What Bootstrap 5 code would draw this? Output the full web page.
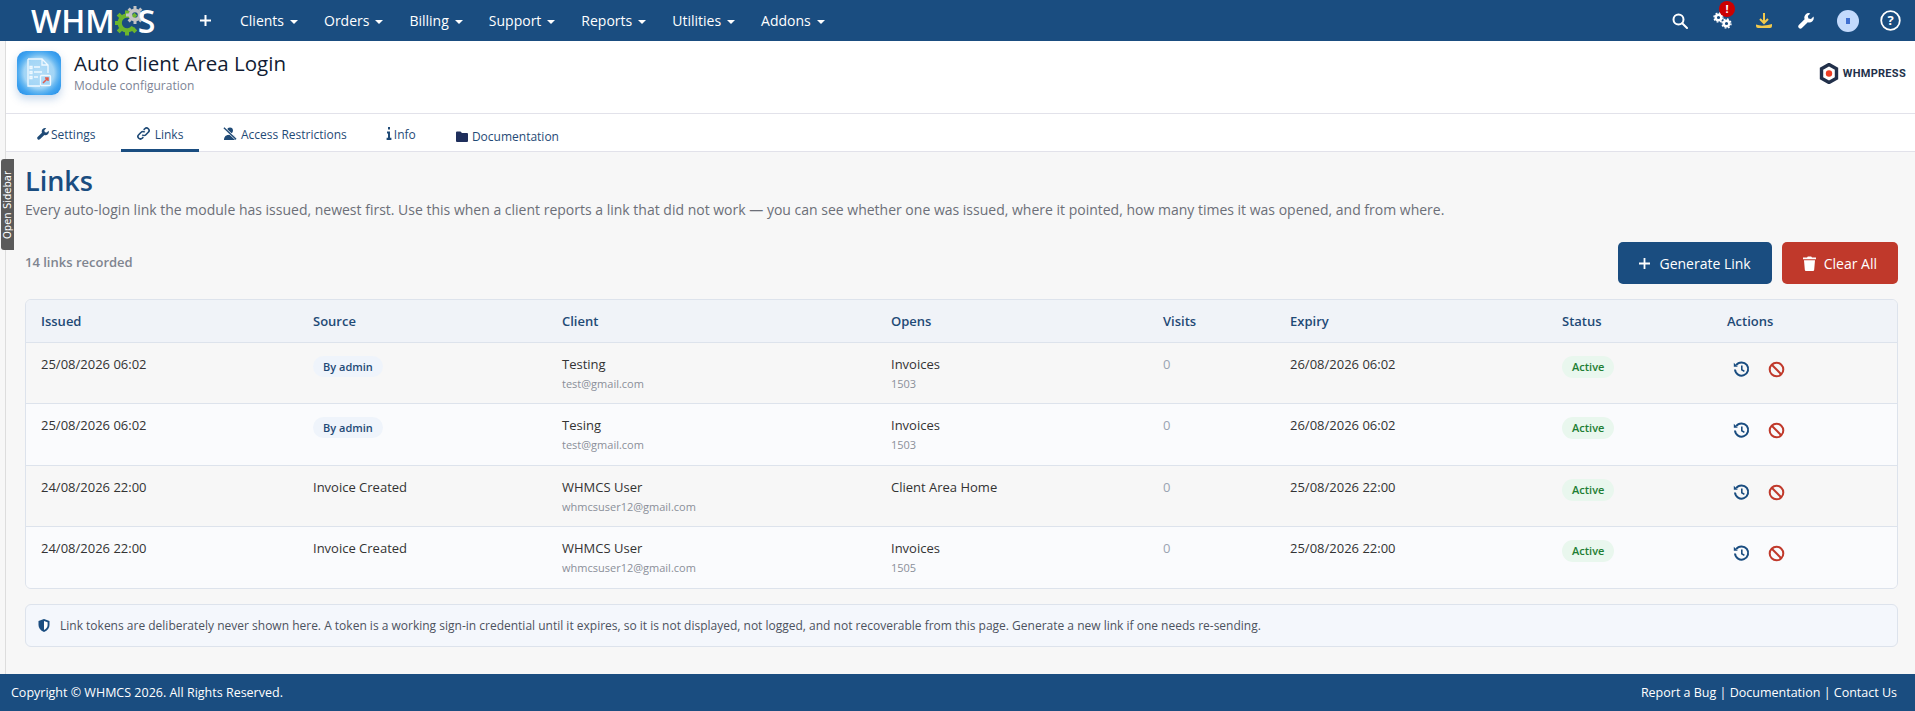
<!DOCTYPE html>
<html lang="en"><head><meta charset="utf-8"><title>Links</title>
<link rel="stylesheet" href="https://cdn.jsdelivr.net/npm/bootstrap@5.3.0/dist/css/bootstrap.min.css">
<style>
html,body{height:100%}
body{font-family:"Open Sans",sans-serif;font-size:13px;background:#f7f7f7;color:#333;overflow:hidden}
.pg{min-height:711px}
.topbar{height:41px;background:#1a4d80;padding:0}
.brandbox{width:185px;padding-left:31px;color:#fff;font:600 32px/41px "Open Sans",sans-serif;letter-spacing:0}
.brandbox svg{margin:0 -10px 0 0;vertical-align:-3px}
.mainnav{font-size:14px;margin-left:14px}
.mainnav a{color:#fff;text-decoration:none;padding:0 14px 0 0;margin-right:12px;display:block;line-height:41px;white-space:nowrap}
.caretm::after{content:"";display:inline-block;margin-left:6px;vertical-align:2px;border-top:4px solid #fff;border-left:4px solid transparent;border-right:4px solid transparent}
.plus{width:41px}
.rightnav{padding-right:4px}
.ricon{width:42px;height:41px;display:flex;align-items:center;justify-content:center;position:relative}
.alertdot{position:absolute;top:1px;left:18px;width:16px;height:16px;border-radius:50%;background:#c00;color:#fff;font:700 11px/16px "Open Sans",sans-serif;text-align:center}
.avatarc{width:22px;height:22px;border-radius:50%;background:#c3dafc;display:flex;align-items:center;justify-content:center}
.avatarc i{display:block;width:4px;height:6px;background:#3f6fd0}
.shell{margin-left:5px;border-left:1px solid #ddd;position:relative}
.modhead{height:73px;background:#fff;border-bottom:1px solid #e2e2ea;padding:9px 0 0 11px}
.headl{gap:13px}
.appicon{width:44px;height:44px;margin-top:1px;border-radius:9px;background:radial-gradient(circle at 50% 50%,#b4ddf7 0,#a2d5f6 48%,#6ab9f1 60%,#42a5f0 72%,#1e88e5 100%);box-shadow:0 4px 9px rgba(30,100,180,.25);display:flex;align-items:center;justify-content:center}
.modtitle{font-size:20.5px;font-weight:500;color:#111c33;line-height:27px;margin:0}
.modsub{font-size:12px;color:#7d8496;margin-top:1px;line-height:16px}
.vendor{font:700 11px/1 "Roboto",sans-serif;color:#22304a;letter-spacing:.3px;padding-right:9px;margin-top:13px;height:21px}
.tabsrow{height:38px;background:#fff;border-bottom:1px solid #e2e2ea;padding-left:12px}
.tabsrow .nav-link{color:#1f4a76;font-size:12px;padding:0;height:38px;line-height:42px;border:0;border-radius:0;background:none;white-space:nowrap}
.tabsrow .nav-link.active{border-bottom:3px solid #1a4d80;color:#1f4a76;background:none}
.tabsrow svg{vertical-align:-1px;margin-right:2px}
.tabsrow .nav-link.t1{width:103px;padding-left:19px}
.tabsrow .nav-link.t2{width:78px;text-align:center}
.tabsrow .nav-link.t3{margin-left:24px}
.tabsrow .nav-link.t3 svg{margin-right:4px}
.tabsrow .nav-link.t4{margin-left:39px}
.tabsrow .nav-link.t5{margin-left:40px;line-height:46px}
.tabsrow .nav-link.t5 svg{margin-right:1px}
.bodyarea{padding:11px 17px 0 19px;height:522px}
.secth{font-size:27px;font-weight:600;color:#1a4d80;line-height:36px;margin:0}
.sectp{font-size:14px;color:#6c6f78;margin:1px 0 0;line-height:20px}
.countrow{margin-top:22px;height:42px}
.countl{font-size:13px;font-weight:600;color:#7f8590}
.btnrow{gap:10px}
.btnm{height:42px;font-size:14px;color:#fff;border:0;border-radius:5px;display:inline-flex;align-items:center;gap:8px;padding:0 21px 0 20px}
.btnb,.btnb:hover{background:#1a4d80;color:#fff}
.btnr,.btnr:hover{background:#c0392b;color:#fff;padding:0 21px 0 21px;gap:8px}
.tablebox{margin-top:15px;border:1px solid #dde3ec;border-radius:6px;overflow:hidden}
.lt{table-layout:fixed;margin:0;--bs-table-bg:transparent;font-size:13px;color:#333}
.lt th{height:42px;background:#f0f3f8;color:#1f4a76;font-weight:600;padding:2px 15px 0;vertical-align:middle;border-bottom:1px solid #dde3ec}
.lt td{padding:11px 15px 0;vertical-align:top;border-bottom:1px solid #dde3ec;height:61.500px;line-height:20px;color:#333}
.lt tr:last-child td{border-bottom:0}
.lt tbody tr:nth-child(even) td{background:#fafbfd}
.lt td.visn{color:#9aa4b2}
.c1{width:272px}.c2{width:249px}.c3{width:329px}.c4{width:272px}.c5{width:127px}.c6{width:272px}.c7{width:165px}
.subt{font-size:11px;color:#8a8f99;line-height:18px;margin-top:1px}
.pillb{display:inline-block;background:#eff4fb;color:#1f4a76;font-size:11px;font-weight:600;padding:0 10px;height:21px;line-height:21px;border-radius:11px;margin-top:2px}
.pillg{display:inline-block;background:#e9f7ee;color:#1e7e34;font-size:11px;font-weight:600;padding:0 10px;height:22px;line-height:22px;border-radius:11px;margin-top:2px}
.acts{display:flex;gap:18px;padding:7px 0 0 6px}
.notebox{margin-top:15px;background:#f4f7fc;border:1px solid #dde3ec;border-radius:6px;height:43px;display:flex;align-items:center;padding:0 12px;font-size:12px;color:#4c525e;gap:10px}
.sidebtn{position:absolute;left:-5px;top:118px;width:13px;height:91px;background:#5a5a5a;border-radius:0 3px 3px 0;color:#fff;font:10px/13px "DejaVu Sans",sans-serif;writing-mode:vertical-rl;transform:rotate(180deg);text-align:center;white-space:nowrap}
.foot{height:37px;background:#1a4d80;color:#fff;font-size:12.5px;padding:1px 18px 0 11px}
.foot a{color:#fff;text-decoration:none}
</style></head><body>
<div class="pg d-flex flex-column">
<nav class="topbar d-flex align-items-center justify-content-between">
 <div class="d-flex align-items-center">
  <div class="brandbox text-nowrap">WHM<svg width="33" height="30" viewBox="0 0 33 30"><g transform="translate(12 17)" fill="#6cb52d"><path d="M8 -5A9.400 9.400 0 1 0 8 5L4.500 3A5.300 5.300 0 1 1 4.500 -3z"/><rect x="-2" y="-12.500" width="4" height="4"/><rect x="-2" y="8.500" width="4" height="4"/><rect x="-12.500" y="-2" width="4" height="4"/><rect x="-2" y="-12.500" width="4" height="4" transform="rotate(45)"/><rect x="-2" y="8.500" width="4" height="4" transform="rotate(45)"/><rect x="-2" y="-12.500" width="4" height="4" transform="rotate(-45)"/><rect x="-2" y="8.500" width="4" height="4" transform="rotate(-45)"/></g><g transform="translate(20 9)" fill="#c4c4c4"><path d="M-6.500 0a6.500 6.500 0 1 1 13 0a6.500 6.500 0 1 1-13 0zM-2.800 0a2.800 2.800 0 1 0 5.600 0a2.800 2.800 0 1 0-5.600 0z" fill-rule="evenodd"/><rect x="-1.500" y="-9" width="3" height="3"/><rect x="-1.500" y="6" width="3" height="3"/><rect x="-9" y="-1.500" width="3" height="3"/><rect x="6" y="-1.500" width="3" height="3"/><rect x="-1.500" y="-9" width="3" height="3" transform="rotate(45)"/><rect x="-1.500" y="-9" width="3" height="3" transform="rotate(-45)"/><rect x="-1.500" y="6" width="3" height="3" transform="rotate(45)"/><rect x="-1.500" y="6" width="3" height="3" transform="rotate(-45)"/></g></svg>S</div>
  <div class="plus d-flex justify-content-center"><svg width="13" height="13" viewBox="0 0 13 13"><path d="M6.500 1v11M1 6.500h11" stroke="#fff" stroke-width="2"/></svg></div>
  <div class="mainnav d-flex">
   <a href="#" class="caretm">Clients</a><a href="#" class="caretm">Orders</a><a href="#" class="caretm">Billing</a><a href="#" class="caretm">Support</a><a href="#" class="caretm">Reports</a><a href="#" class="caretm">Utilities</a><a href="#" class="caretm">Addons</a>
  </div>
 </div>
 <div class="rightnav d-flex">
  <div class="ricon"><svg width="16" height="16" viewBox="0 0 16 16" fill="none" stroke="#fff" stroke-width="2"><circle cx="6.500" cy="6.500" r="5"/><path d="M10.200 10.200 15 15" stroke-linecap="round"/></svg></div>
  <div class="ricon"><svg width="19" height="17" viewBox="0 0 19 17" fill="none" stroke="#fff"><circle cx="5.500" cy="5.500" r="2.800" stroke-width="2.400"/><circle cx="5.500" cy="5.500" r="4.500" stroke-width="1.400" stroke-dasharray="1.800 1.730"/><circle cx="13.500" cy="11.500" r="2.800" stroke-width="2.400"/><circle cx="13.500" cy="11.500" r="4.500" stroke-width="1.400" stroke-dasharray="1.800 1.730"/></svg><span class="alertdot">!</span></div>
  <div class="ricon"><svg width="16" height="16" viewBox="0 0 16 16"><path d="M0 11.500q4 1.500 8 1t8-1.500v2q0 2-2 2H2q-2 0-2-2z" fill="#f2c94c"/><path d="M8 0v9M4 6l4 4 4-4" fill="none" stroke="#f2c94c" stroke-width="2"/></svg></div>
  <div class="ricon"><svg width="16" height="16" viewBox="0 0 16 16"><path d="M15.500 3.600 13 6.100l-2.600-.6-.6-2.600L12.300.4A4.500 4.500 0 0 0 6.600 6.200L.8 12a2.200 2.200 0 0 0 3.100 3.100l5.900-5.800a4.500 4.500 0 0 0 5.700-5.700z" fill="#fff"/></svg></div>
  <div class="ricon"><span class="avatarc"><i></i></span></div>
  <div class="ricon"><svg width="21" height="21" viewBox="0 0 21 21"><circle cx="10.500" cy="10.500" r="9.300" fill="none" stroke="#fff" stroke-width="1.800"/><text x="10.500" y="15" text-anchor="middle" font-family="Open Sans" font-weight="700" font-size="13" fill="#fff">?</text></svg></div>
 </div>
</nav>
<div class="shell flex-grow-1">
 <div class="modhead d-flex justify-content-between">
  <div class="d-flex headl">
   <div class="appicon"><svg width="26" height="30" viewBox="0 0 26 30" fill="none" stroke="#f0f9ff" stroke-width="1.300"><path d="M2 1h14l6 6v8M14 28H2V1M16 1v6h6"/><path d="M8 9h6M8 14h8M8 19h4M4 8.500h2v2H4zM4 13.500h2v2H4zM4 18.500h2v2H4z"/><rect x="14.500" y="17.500" width="10" height="10" rx="1"/><path d="M17 25l5-5M19 20h3v3" stroke="#e25b4e" stroke-width="1.500"/></svg></div>
   <div><h1 class="modtitle">Auto Client Area Login</h1><div class="modsub">Module configuration</div></div>
  </div>
  <div class="vendor d-flex align-items-center gap-1"><svg width="20" height="21" viewBox="0 0 20 21"><path d="M10 1.500l7.500 4.200v9.600L10 19.500l-7.500-4.200V5.700z" fill="none" stroke="#22304a" stroke-width="3.400"/><circle cx="10" cy="10.500" r="3.200" fill="#ee3d23"/></svg>WHMPRESS</div>
 </div>
 <ul class="tabsrow nav">
  <li class="nav-item"><a class="nav-link t1" href="#"><svg width="12" height="12" viewBox="0 0 16 16"><path d="M15.500 3.600 13 6.100l-2.600-.6-.6-2.600L12.300.4A4.500 4.500 0 0 0 6.600 6.200L.8 12a2.200 2.200 0 0 0 3.100 3.100l5.900-5.800a4.500 4.500 0 0 0 5.700-5.700z" fill="#1f4a76"/></svg>Settings</a></li>
  <li class="nav-item"><a class="nav-link active t2" href="#"><svg width="13" height="13" viewBox="0 0 16 16" fill="none" stroke="#1f4a76" stroke-width="2"><path d="M6.500 9.500a3 3 0 0 0 4.400 0l3-3a3 3 0 0 0-4.300-4.300L8.200 3.600M9.500 6.500a3 3 0 0 0-4.400 0l-3 3a3 3 0 0 0 4.300 4.300l1.400-1.400"/></svg> Links</a></li>
  <li class="nav-item"><a class="nav-link t3" href="#"><svg width="14" height="13" viewBox="0 0 16 15"><circle cx="8" cy="4" r="3.400" fill="#1f4a76"/><path d="M1 15q0-6 7-6t7 6z" fill="#1f4a76"/><path d="M1 1l14 13" stroke="#fff" stroke-width="3"/><path d="M1 1l14 13" stroke="#1f4a76" stroke-width="1.600"/></svg>Access Restrictions</a></li>
  <li class="nav-item"><a class="nav-link t4" href="#"><svg width="6" height="13" viewBox="0 0 6 13"><path d="M2 0h2v2.400H2zM1 4.400h3v6.400h1.400V13H.6v-2.200H2V6.400H1z" fill="#1f4a76"/></svg>Info</a></li>
  <li class="nav-item"><a class="nav-link t5" href="#"><svg width="12" height="11" viewBox="0 0 12 11"><path d="M0 1.500q0-1 1-1h3.500l1.500 1.500h5q1 0 1 1v7q0 1-1 1H1q-1 0-1-1z" fill="#1f2f5c"/></svg> Documentation</a></li>
 </ul>
 <div class="bodyarea">
  <h2 class="secth">Links</h2>
  <p class="sectp">Every auto-login link the module has issued, newest first. Use this when a client reports a link that did not work — you can see whether one was issued, where it pointed, how many times it was opened, and from where.</p>
  <div class="countrow d-flex justify-content-between align-items-center">
   <span class="countl">14 links recorded</span>
   <div class="d-flex btnrow">
    <a href="#" class="btn btnm btnb"><svg width="13" height="13" viewBox="0 0 13 13"><path d="M6.500 1v11M1 6.500h11" stroke="#fff" stroke-width="1.800"/></svg>Generate Link</a>
    <a href="#" class="btn btnm btnr"><svg width="13" height="15" viewBox="0 0 13 15"><path d="M0 1.600h4L4.800.4h3.400L9 1.600h4v1.600H0zM1 4.200h11l-.8 9.600q-.1 1.200-1.200 1.200H3q-1.100 0-1.200-1.200z" fill="#fff"/></svg>Clear All</a>
   </div>
  </div>
  <div class="tablebox">
   <table class="table lt">
    <colgroup><col class="c1"><col class="c2"><col class="c3"><col class="c4"><col class="c5"><col class="c6"><col class="c7"><col></colgroup>
    <thead><tr><th>Issued</th><th>Source</th><th>Client</th><th>Opens</th><th>Visits</th><th>Expiry</th><th>Status</th><th>Actions</th></tr></thead>
    <tbody>
     <tr><td>25/08/2026 06:02</td><td><span class="pillb">By admin</span></td><td>Testing<div class="subt">test@gmail.com</div></td><td>Invoices<div class="subt">1503</div></td><td class="visn">0</td><td>26/08/2026 06:02</td><td><span class="pillg">Active</span></td><td><div class="acts"><svg width="17" height="17" viewBox="0 0 17 17" fill="none" stroke="#1a4d80" stroke-width="2"><path d="M3.200 4.200A6.600 6.600 0 1 1 2 8.500"/><path d="M.8 1.800v4h4z" fill="#1a4d80" stroke="none"/><path d="M8.800 4.600v4.200l2.600 1.600" stroke-width="1.600"/></svg><svg width="17" height="17" viewBox="0 0 17 17" fill="none" stroke="#c0392b" stroke-width="2"><circle cx="8.500" cy="8.500" r="6.800"/><path d="M3.800 3.800l9.400 9.400"/></svg></div></td></tr>
     <tr><td>25/08/2026 06:02</td><td><span class="pillb">By admin</span></td><td>Tesing<div class="subt">test@gmail.com</div></td><td>Invoices<div class="subt">1503</div></td><td class="visn">0</td><td>26/08/2026 06:02</td><td><span class="pillg">Active</span></td><td><div class="acts"><svg width="17" height="17" viewBox="0 0 17 17" fill="none" stroke="#1a4d80" stroke-width="2"><path d="M3.200 4.200A6.600 6.600 0 1 1 2 8.500"/><path d="M.8 1.800v4h4z" fill="#1a4d80" stroke="none"/><path d="M8.800 4.600v4.200l2.600 1.600" stroke-width="1.600"/></svg><svg width="17" height="17" viewBox="0 0 17 17" fill="none" stroke="#c0392b" stroke-width="2"><circle cx="8.500" cy="8.500" r="6.800"/><path d="M3.800 3.800l9.400 9.400"/></svg></div></td></tr>
     <tr><td>24/08/2026 22:00</td><td>Invoice Created</td><td>WHMCS User<div class="subt">whmcsuser12@gmail.com</div></td><td>Client Area Home</td><td class="visn">0</td><td>25/08/2026 22:00</td><td><span class="pillg">Active</span></td><td><div class="acts"><svg width="17" height="17" viewBox="0 0 17 17" fill="none" stroke="#1a4d80" stroke-width="2"><path d="M3.200 4.200A6.600 6.600 0 1 1 2 8.500"/><path d="M.8 1.800v4h4z" fill="#1a4d80" stroke="none"/><path d="M8.800 4.600v4.200l2.600 1.600" stroke-width="1.600"/></svg><svg width="17" height="17" viewBox="0 0 17 17" fill="none" stroke="#c0392b" stroke-width="2"><circle cx="8.500" cy="8.500" r="6.800"/><path d="M3.800 3.800l9.400 9.400"/></svg></div></td></tr>
     <tr><td>24/08/2026 22:00</td><td>Invoice Created</td><td>WHMCS User<div class="subt">whmcsuser12@gmail.com</div></td><td>Invoices<div class="subt">1505</div></td><td class="visn">0</td><td>25/08/2026 22:00</td><td><span class="pillg">Active</span></td><td><div class="acts"><svg width="17" height="17" viewBox="0 0 17 17" fill="none" stroke="#1a4d80" stroke-width="2"><path d="M3.200 4.200A6.600 6.600 0 1 1 2 8.500"/><path d="M.8 1.800v4h4z" fill="#1a4d80" stroke="none"/><path d="M8.800 4.600v4.200l2.600 1.600" stroke-width="1.600"/></svg><svg width="17" height="17" viewBox="0 0 17 17" fill="none" stroke="#c0392b" stroke-width="2"><circle cx="8.500" cy="8.500" r="6.800"/><path d="M3.800 3.800l9.400 9.400"/></svg></div></td></tr>
    </tbody>
   </table>
  </div>
  <div class="notebox"><svg width="12" height="13" viewBox="0 0 12 13"><path d="M6 0l5.500 2v4q0 4.500-5.500 7Q.5 10.500.5 6V2z" fill="#1a4d80"/><path d="M6 2v9q3.600-2 3.600-5V3.300z" fill="#fff"/></svg><span>Link tokens are deliberately never shown here. A token is a working sign-in credential until it expires, so it is not displayed, not logged, and not recoverable from this page. Generate a new link if one needs re-sending.</span></div>
 </div>
 <div class="sidebtn">Open Sidebar</div>
</div>
<footer class="foot d-flex justify-content-between align-items-center"><span>Copyright © WHMCS 2026. All Rights Reserved.</span><span><a href="#">Report a Bug</a> | <a href="#">Documentation</a> | <a href="#">Contact Us</a></span></footer>
</div>
</body></html>
